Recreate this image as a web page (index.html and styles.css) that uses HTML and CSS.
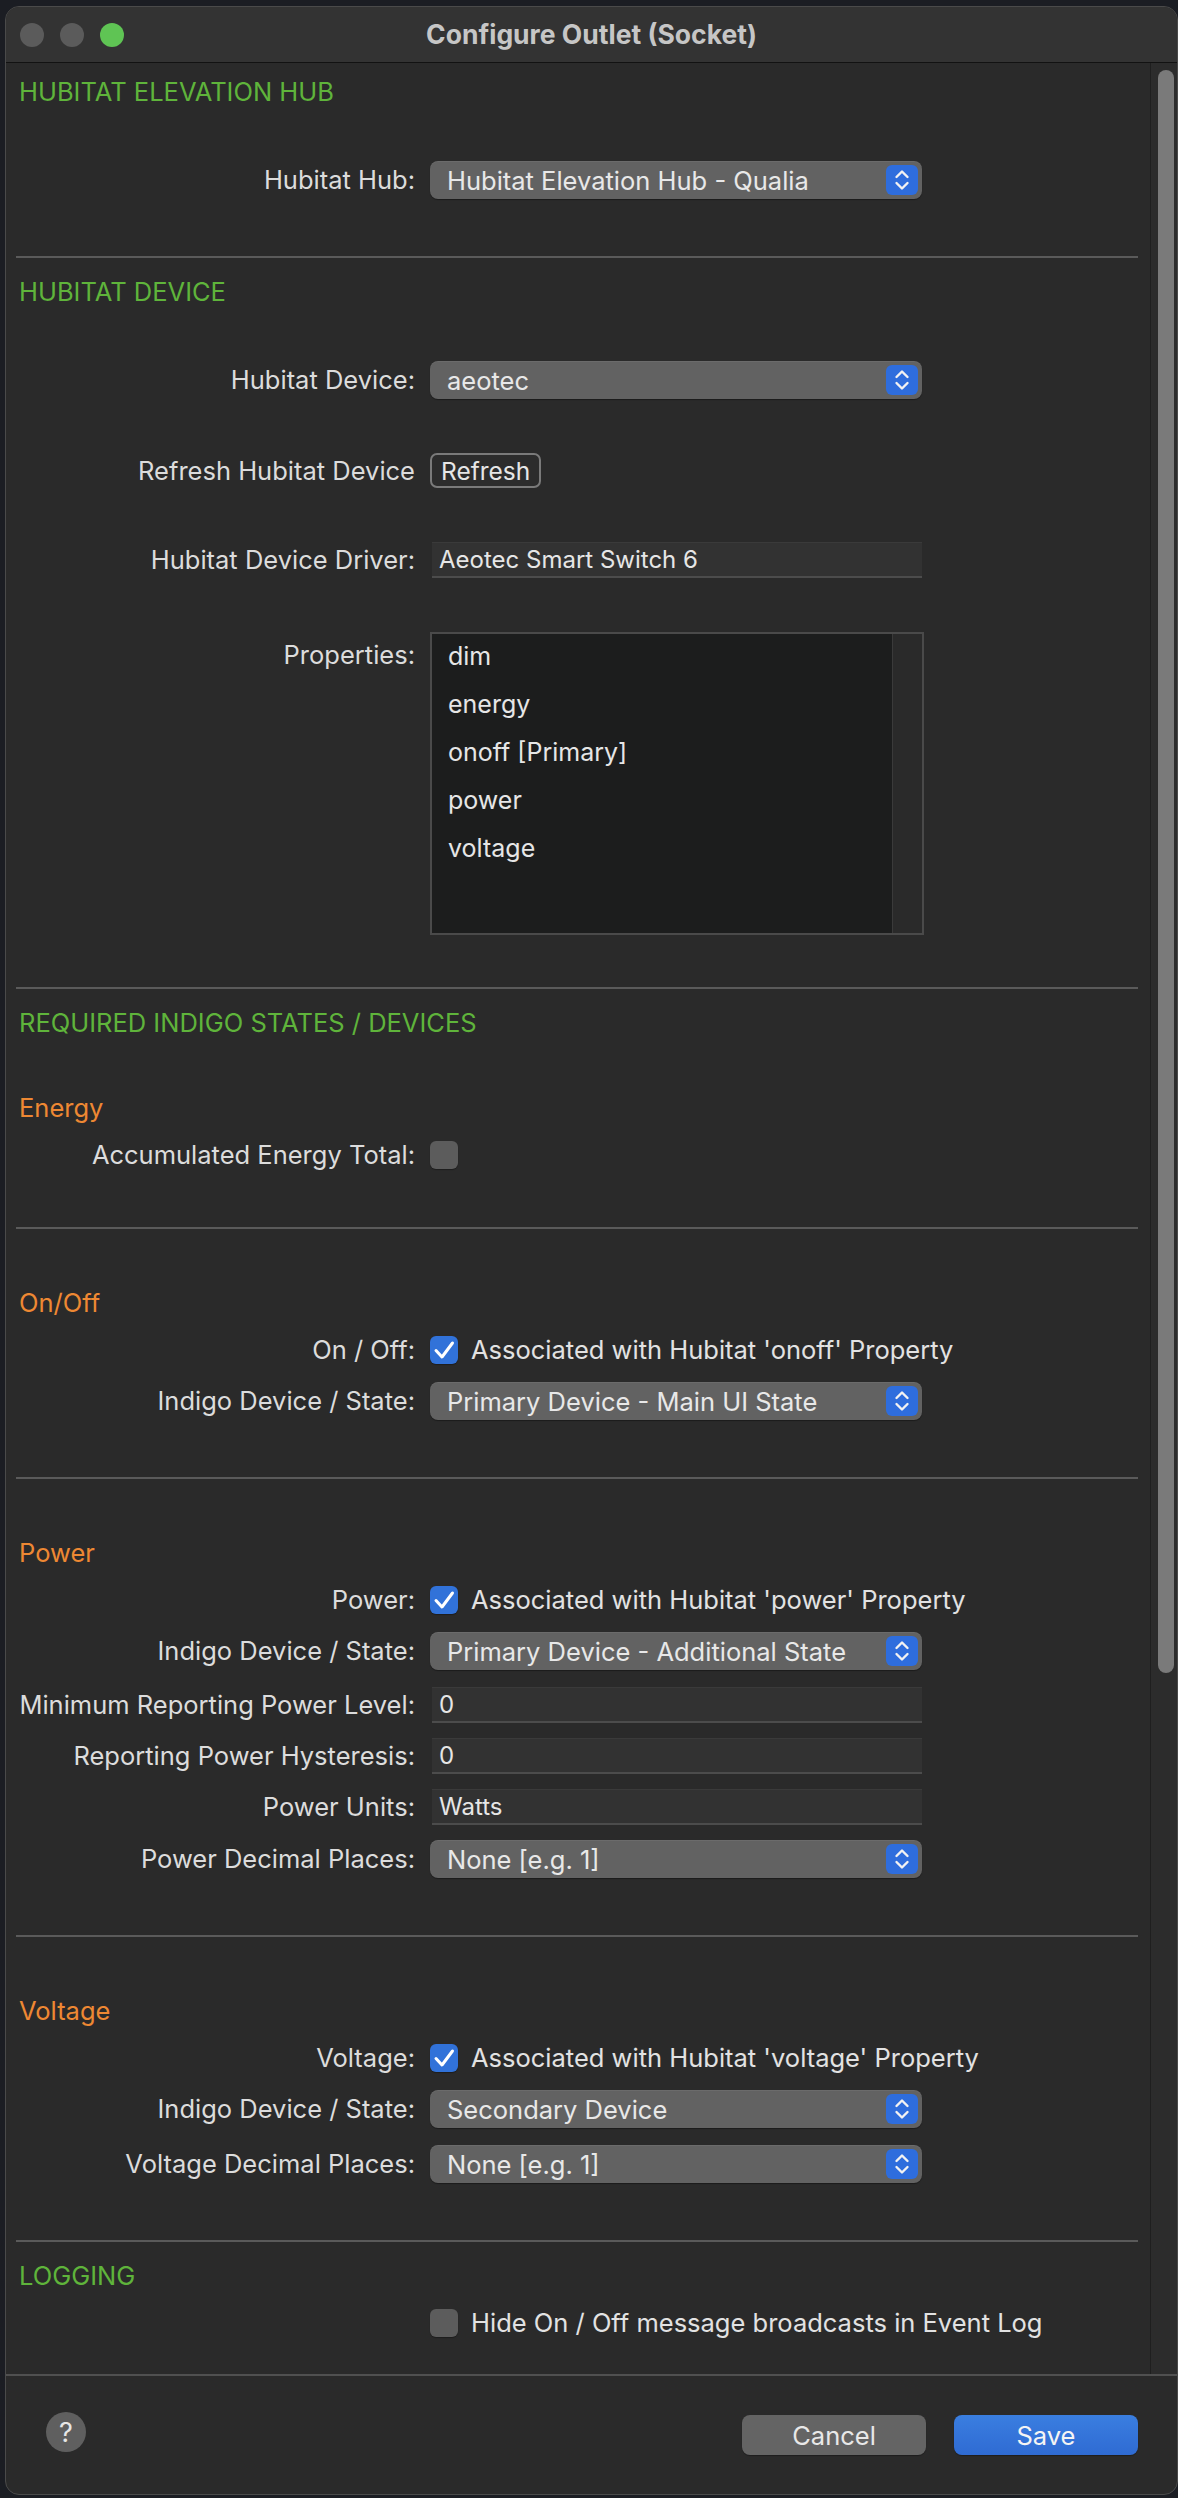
FILE: index.html
```html
<!DOCTYPE html>
<html lang="en">
<head>
    <meta charset="UTF-8">
    <meta name="viewport" content="width=device-width, initial-scale=1.0">
    <title>Configure Outlet (Socket)</title>
    <link rel="stylesheet" href="styles.css">
</head>
<body>
    <div class="window">
        <div class="titlebar">
            <div class="lights">
                <span class="light"></span>
                <span class="light"></span>
                <span class="light green"></span>
            </div>
            <div class="title">Configure Outlet (Socket)</div>
        </div>

        <div class="main">
            <div class="content">
                <h2 class="section-title first">HUBITAT ELEVATION HUB</h2>
                <div class="row loose">
                    <label>Hubitat Hub:</label>
                    <div class="popup">Hubitat Elevation Hub - Qualia<span class="stepper"><svg viewBox="0 0 32 30"><path d="M10.5 12 L16 6.5 L21.5 12 M10.5 18 L16 23.5 L21.5 18"/></svg></span></div>
                </div>

                <hr>

                <h2 class="section-title">HUBITAT DEVICE</h2>
                <div class="row loose">
                    <label>Hubitat Device:</label>
                    <div class="popup">aeotec<span class="stepper"><svg viewBox="0 0 32 30"><path d="M10.5 12 L16 6.5 L21.5 12 M10.5 18 L16 23.5 L21.5 18"/></svg></span></div>
                </div>
                <div class="row loose">
                    <label>Refresh Hubitat Device</label>
                    <div><button class="btn-small">Refresh</button></div>
                </div>
                <div class="row loose">
                    <label>Hubitat Device Driver:</label>
                    <div class="field">Aeotec Smart Switch 6</div>
                </div>
                <div class="row loose list-row">
                    <label>Properties:</label>
                    <div class="list">
                        <ul>
                            <li>dim</li>
                            <li>energy</li>
                            <li>onoff [Primary]</li>
                            <li>power</li>
                            <li>voltage</li>
                        </ul>
                        <div class="list-scroll"></div>
                    </div>
                </div>

                <hr>

                <h2 class="section-title">REQUIRED INDIGO STATES / DEVICES</h2>
                <h3 class="sub-title">Energy</h3>
                <div class="row">
                    <label>Accumulated Energy Total:</label>
                    <div class="check-wrap"><span class="checkbox"></span></div>
                </div>

                <hr>

                <h3 class="sub-title">On/Off</h3>
                <div class="row">
                    <label>On / Off:</label>
                    <div class="check-wrap"><span class="checkbox checked"><svg viewBox="0 0 28 27"><path d="M6 14 L12 20.5 L22.5 6.5"/></svg></span>Associated with Hubitat 'onoff' Property</div>
                </div>
                <div class="row">
                    <label>Indigo Device / State:</label>
                    <div class="popup">Primary Device - Main UI State<span class="stepper"><svg viewBox="0 0 32 30"><path d="M10.5 12 L16 6.5 L21.5 12 M10.5 18 L16 23.5 L21.5 18"/></svg></span></div>
                </div>

                <hr>

                <h3 class="sub-title">Power</h3>
                <div class="row">
                    <label>Power:</label>
                    <div class="check-wrap"><span class="checkbox checked"><svg viewBox="0 0 28 27"><path d="M6 14 L12 20.5 L22.5 6.5"/></svg></span>Associated with Hubitat 'power' Property</div>
                </div>
                <div class="row">
                    <label>Indigo Device / State:</label>
                    <div class="popup">Primary Device - Additional State<span class="stepper"><svg viewBox="0 0 32 30"><path d="M10.5 12 L16 6.5 L21.5 12 M10.5 18 L16 23.5 L21.5 18"/></svg></span></div>
                </div>
                <div class="row">
                    <label>Minimum Reporting Power Level:</label>
                    <div class="field">0</div>
                </div>
                <div class="row tight">
                    <label>Reporting Power Hysteresis:</label>
                    <div class="field">0</div>
                </div>
                <div class="row tight">
                    <label>Power Units:</label>
                    <div class="field">Watts</div>
                </div>
                <div class="row tight">
                    <label>Power Decimal Places:</label>
                    <div class="popup">None [e.g. 1]<span class="stepper"><svg viewBox="0 0 32 30"><path d="M10.5 12 L16 6.5 L21.5 12 M10.5 18 L16 23.5 L21.5 18"/></svg></span></div>
                </div>

                <hr>

                <h3 class="sub-title">Voltage</h3>
                <div class="row">
                    <label>Voltage:</label>
                    <div class="check-wrap"><span class="checkbox checked"><svg viewBox="0 0 28 27"><path d="M6 14 L12 20.5 L22.5 6.5"/></svg></span>Associated with Hubitat 'voltage' Property</div>
                </div>
                <div class="row">
                    <label>Indigo Device / State:</label>
                    <div class="popup">Secondary Device<span class="stepper"><svg viewBox="0 0 32 30"><path d="M10.5 12 L16 6.5 L21.5 12 M10.5 18 L16 23.5 L21.5 18"/></svg></span></div>
                </div>
                <div class="row">
                    <label>Voltage Decimal Places:</label>
                    <div class="popup">None [e.g. 1]<span class="stepper"><svg viewBox="0 0 32 30"><path d="M10.5 12 L16 6.5 L21.5 12 M10.5 18 L16 23.5 L21.5 18"/></svg></span></div>
                </div>

                <hr>

                <h2 class="section-title">LOGGING</h2>
                <div class="row">
                    <label></label>
                    <div class="check-wrap"><span class="checkbox"></span>Hide On / Off message broadcasts in Event Log</div>
                </div>
            </div>

            <div class="scrollbar">
                <div class="thumb"></div>
            </div>
        </div>

        <div class="footer">
            <button class="help">?</button>
            <div class="actions">
                <button class="btn">Cancel</button>
                <button class="btn primary">Save</button>
            </div>
        </div>
    </div>
</body>
</html>
```

FILE: styles.css
```css
* {
    margin: 0;
    padding: 0;
    box-sizing: border-box;
    font-family: "Inter", "Liberation Sans", Arial, sans-serif;
}

body {
    background-color: #1b1d23;
    width: 1178px;
    height: 2498px;
    overflow: hidden;
}

.window {
    margin: 6px 0 0 5px;
    width: 1173px;
    height: 2489px;
    background: #2a2a2a;
    border: 1px solid #4a4a4a;
    border-radius: 14px;
    overflow: hidden;
    display: flex;
    flex-direction: column;
}

/* title bar */
.titlebar {
    height: 56px;
    flex-shrink: 0;
    background: #333333;
    border-bottom: 1px solid #121212;
    display: grid;
    grid-template-columns: 1fr auto 1fr;
    align-items: center;
}

.lights {
    display: flex;
    gap: 16px;
    padding-left: 14px;
}

.light {
    width: 24px;
    height: 24px;
    border-radius: 50%;
    background: #5b5b5b;
}

.light.green {
    background: #5fc454;
}

.title {
    font-size: 26.5px;
    font-weight: 700;
    color: #c6c6c6;
    margin-top: -2px;
}

/* scroll area */
.main {
    flex: 1;
    display: flex;
    min-height: 0;
}

.content {
    flex: 1;
    padding-top: 14px;
}

.scrollbar {
    width: 27px;
    border-left: 1px solid #1f1f1f;
    background: #2c2c2c;
    padding: 7px 3px 0 7px;
}

.thumb {
    height: 1603px;
    border-radius: 8px;
    background: #7a7a7a;
}

.section-title {
    font-size: 25.5px;
    font-weight: 400;
    line-height: 30px;
    color: #5fb43b;
    padding-left: 13px;
    margin-top: 19px;
}

.section-title.first {
    margin-top: 0;
}

.sub-title {
    font-size: 25.5px;
    font-weight: 400;
    line-height: 30px;
    color: #ee8833;
    padding-left: 13px;
    margin-top: 59px;
}

.section-title + .sub-title {
    margin-top: 55px;
}

hr {
    border: none;
    border-top: 2px solid #5a5a5a;
    margin: 57px 12px 0 10px;
}

.list-row + hr {
    margin-top: 52px;
}

.row {
    display: grid;
    grid-template-columns: 409px 492px;
    column-gap: 15px;
    align-items: center;
    margin-top: 17px;
}

.row.tight {
    margin-top: 15px;
}

.row.loose {
    margin-top: 54px;
}

.row.list-row {
    align-items: start;
}

.row label {
    text-align: right;
    font-size: 25.5px;
    line-height: 30px;
    color: #dcdcdc;
    white-space: nowrap;
}

.list-row label {
    margin-top: 8px;
}

/* popup button */
.popup {
    height: 38px;
    background: #626262;
    border-radius: 8px;
    box-shadow: 0 1px 1px rgba(0, 0, 0, 0.35), inset 0 1px 0 rgba(255, 255, 255, 0.06);
    display: flex;
    align-items: center;
    justify-content: space-between;
    padding: 0 4px 0 17px;
    font-size: 25.5px;
    color: #e8e8e8;
}

.stepper {
    width: 32px;
    height: 30px;
    flex-shrink: 0;
    border-radius: 6px;
    background: #2e6ddd;
    display: flex;
}

.stepper svg {
    width: 32px;
    height: 30px;
}

.stepper path {
    fill: none;
    stroke: #f2f2f2;
    stroke-width: 2.4;
    stroke-linecap: round;
    stroke-linejoin: round;
}

/* text field */
.field {
    height: 36px;
    margin-left: 2px;
    background: #323232;
    border-top: 1px solid #3a3a3a;
    border-bottom: 2px solid #4c4c4c;
    display: flex;
    align-items: center;
    padding-left: 7px;
    font-size: 24px;
    color: #e6e6e6;
}

.btn-small {
    height: 35px;
    padding: 0 9px;
    background: #2c2c2c;
    border: 2px solid #7a7a7a;
    border-radius: 7px;
    font-size: 24.5px;
    color: #e6e6e6;
}

/* list */
.list {
    height: 303px;
    border: 2px solid #4a4a4a;
    background: #1c1d1d;
    display: flex;
    margin-right: -2px;
}

.list ul {
    flex: 1;
    list-style: none;
    padding: 4px 0 0 16px;
}

.list li {
    height: 48px;
    line-height: 36px;
    font-size: 25px;
    color: #e6e6e6;
}

.list-scroll {
    width: 30px;
    background: #2a2a2a;
    border-left: 1px solid #3a3a3a;
}

/* checkbox */
.check-wrap {
    display: flex;
    align-items: center;
    gap: 13px;
    font-size: 25.5px;
    line-height: 30px;
    color: #e2e2e2;
    white-space: nowrap;
}

.checkbox {
    width: 28px;
    height: 28px;
    flex-shrink: 0;
    border-radius: 6px;
    background: #5c5c5c;
    box-shadow: 0 1px 1px rgba(0, 0, 0, 0.3);
    display: flex;
}

.checkbox.checked {
    background: #3172d9;
}

.checkbox svg {
    width: 28px;
    height: 28px;
}

.checkbox path {
    fill: none;
    stroke: #ffffff;
    stroke-width: 3;
    stroke-linecap: round;
    stroke-linejoin: round;
}

/* footer */
.footer {
    height: 120px;
    flex-shrink: 0;
    border-top: 2px solid #505050;
    display: flex;
    align-items: center;
    justify-content: space-between;
    padding: 0 39px 0 40px;
}

.help {
    width: 40px;
    height: 40px;
    border-radius: 50%;
    border: none;
    background: #5f5f5f;
    color: #e6e6e6;
    font-size: 27px;
    margin-top: -6px;
}

.actions {
    display: flex;
    gap: 28px;
}

.btn {
    width: 184px;
    height: 40px;
    border: none;
    border-radius: 8px;
    background: #646464;
    color: #e8e8e8;
    font-size: 25.5px;
    box-shadow: 0 1px 1px rgba(0, 0, 0, 0.3);
}

.btn.primary {
    background: linear-gradient(#3a7ee0, #2f6bd3);
    color: #f4f4f4;
}
```
